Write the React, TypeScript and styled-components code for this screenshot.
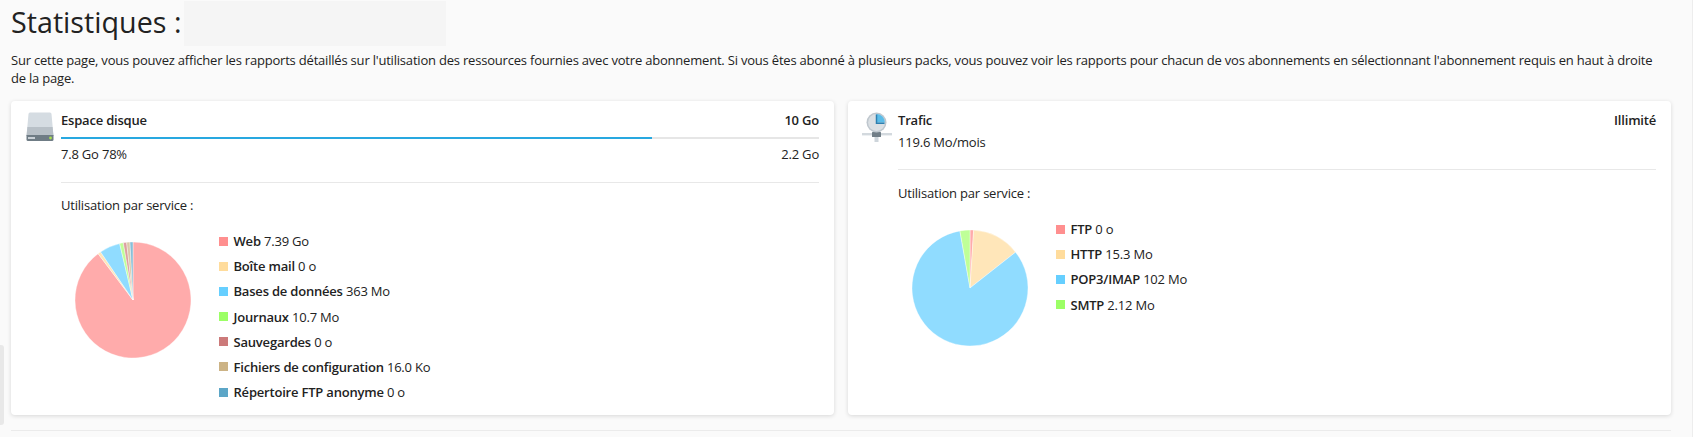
import styled, { createGlobalStyle } from "styled-components";

type Item = { label: string; value: string; color: string; pie: string; end: number };

const diskItems: Item[] = [
  { label: "Web", value: "7.39 Go", color: "#ff8f8f", pie: "#ffabab", end: 323 },
  { label: "Boîte mail", value: "0 o", color: "#ffdc9c", pie: "#ffe6b9", end: 326 },
  { label: "Bases de données", value: "363 Mo", color: "#66cfff", pie: "#90dcff", end: 346.7 },
  { label: "Journaux", value: "10.7 Mo", color: "#9cff66", pie: "#bfff98", end: 350.4 },
  { label: "Sauvegardes", value: "0 o", color: "#cc7a7a", pie: "#dca0a0", end: 353.7 },
  { label: "Fichiers de configuration", value: "16.0 Ko", color: "#ccb385", pie: "#dbc9a8", end: 357 },
  { label: "Répertoire FTP anonyme", value: "0 o", color: "#5ca6c7", pie: "#88bfd8", end: 360 },
];

const trafficItems: Item[] = [
  { label: "FTP", value: "0 o", color: "#ff8f8f", pie: "#ffabab", end: 3.6 },
  { label: "HTTP", value: "15.3 Mo", color: "#ffdc9c", pie: "#ffe6b9", end: 51.8 },
  { label: "POP3/IMAP", value: "102 Mo", color: "#66cfff", pie: "#90dcff", end: 350 },
  { label: "SMTP", value: "2.12 Mo", color: "#9cff66", pie: "#bfff98", end: 360 },
];

const point = (deg: number) => {
  const rad = (deg * Math.PI) / 180;
  return `${(59 + 58 * Math.sin(rad)).toFixed(2)} ${(59 - 58 * Math.cos(rad)).toFixed(2)}`;
};

const Pie = ({ items }: { items: Item[] }) => (
  <PieSvg viewBox="0 0 118 118">
    {items.map((item, i) => {
      const start = i === 0 ? 0 : items[i - 1].end;
      const large = item.end - start > 180 ? 1 : 0;
      return (
        <path
          key={item.label}
          d={`M59 59L${point(start)}A58 58 0 ${large} 1 ${point(item.end)}Z`}
          fill={item.pie}
          stroke="#fff"
          strokeOpacity="0.55"
          strokeWidth="0.7"
        />
      );
    })}
  </PieSvg>
);

const Legend = ({ items }: { items: Item[] }) => (
  <LegendList>
    {items.map((item) => (
      <LegendRow key={item.label}>
        <Swatch $color={item.color} />
        <span>
          <b>{item.label}</b> {item.value}
        </span>
      </LegendRow>
    ))}
  </LegendList>
);

const DiskIcon = () => (
  <svg width="28" height="30" viewBox="0 0 28 30">
    <path d="M2.5 2Q2.6 0.5 4 0.5H24Q25.4 0.5 25.5 2L27.5 24H0.5Z" fill="#d5dce2" />
    <path d="M1.4 15H26.6L27.5 24H0.5Z" fill="#b8c0c7" />
    <path d="M0.5 23H27.5V27.5Q27.5 29 26 29H2Q0.5 29 0.5 27.5Z" fill="#6f7c85" />
    <rect x="2" y="25" width="7" height="2" fill="#c9d0d6" />
    <circle cx="24.5" cy="26" r="1.4" fill="#a8e04e" />
  </svg>
);

const ClockIcon = () => (
  <svg width="30" height="32" viewBox="0 0 30 32">
    <rect x="0" y="21" width="30" height="2.4" fill="#d3d9de" />
    <rect x="12.5" y="23" width="4" height="7" fill="#ced5db" />
    <rect x="10" y="20" width="9" height="5" rx="0.5" fill="#717e87" />
    <circle cx="14.5" cy="10.5" r="10" fill="#bfc7ce" />
    <circle cx="14.5" cy="10.5" r="8.4" fill="#dbe0e4" />
    <path d="M14.5 2.1A8.4 8.4 0 0 1 22.9 10.5H14.5Z" fill="#5bbce8" />
    <path d="M14.5 2.5V11.3H22.5" fill="none" stroke="#2c7fb0" strokeWidth="1.5" />
  </svg>
);

const App = () => (
  <>
    <GlobalStyle />
    <Page>
      <TitleRow>
        <Title>Statistiques :</Title>
        <Masked />
      </TitleRow>
      <Intro>
        Sur cette page, vous pouvez afficher les rapports détaillés sur l'utilisation des ressources fournies avec
        votre abonnement. Si vous êtes abonné à plusieurs packs, vous pouvez voir les rapports pour chacun de vos
        abonnements en sélectionnant l'abonnement requis en haut à droite de la page.
      </Intro>
      <Cards>
        <Card>
          <IconCell>
            <DiskIcon />
          </IconCell>
          <Body>
            <SpaceRow>
              <strong>Espace disque</strong>
              <strong>10 Go</strong>
            </SpaceRow>
            <Track>
              <TrackFill style={{ width: "78%" }} />
            </Track>
            <SpaceRow>
              <span>7.8 Go 78%</span>
              <span>2.2 Go</span>
            </SpaceRow>
            <Divider />
            <Usage>Utilisation par service :</Usage>
            <ChartRow>
              <Pie items={diskItems} />
              <Legend items={diskItems} />
            </ChartRow>
          </Body>
        </Card>
        <Card>
          <ClockCell>
            <ClockIcon />
          </ClockCell>
          <Body>
            <SpaceRow>
              <strong>Trafic</strong>
              <strong>Illimité</strong>
            </SpaceRow>
            <PlainStat>119.6 Mo/mois</PlainStat>
            <Divider $tight />
            <Usage>Utilisation par service :</Usage>
            <ChartRow>
              <Pie items={trafficItems} />
              <Legend items={trafficItems} />
            </ChartRow>
          </Body>
        </Card>
      </Cards>
      <FootLine />
      <SideHandle />
    </Page>
  </>
);

export default App;

const GlobalStyle = createGlobalStyle`
  html, body {
    margin: 0;
    padding: 0;
    background: #fafafa;
  }
  body {
    font-family: "Open Sans", "Liberation Sans", sans-serif;
    font-size: 13px;
    line-height: 18px;
    letter-spacing: -0.2px;
    color: #222;
  }
`;

const Page = styled.div`
  position: relative;
  box-sizing: border-box;
  width: 1693px;
  height: 437px;
  padding: 0 21px 0 11px;
  border-right: 1px solid #ededed;
  overflow: hidden;
`;

const TitleRow = styled.div`
  display: flex;
  align-items: flex-start;
  gap: 3px;
  padding-top: 1px;
`;

const Title = styled.h1`
  margin: 0;
  padding-top: 3px;
  font-size: 28.7px;
  font-weight: 400;
  line-height: 36px;
  letter-spacing: 0;
  color: #222;
`;

const Masked = styled.div`
  width: 262px;
  height: 45px;
  background: #f5f5f5;
`;

const Intro = styled.p`
  margin: 5px 0 14px;
  padding-right: 4px;
  line-height: 18px;
  letter-spacing: -0.2px;
`;

const Cards = styled.div`
  display: grid;
  grid-template-columns: 823px 823px;
  gap: 14px;
`;

const Card = styled.section`
  display: flex;
  box-sizing: border-box;
  height: 314px;
  padding: 10px 15px;
  background: #fff;
  border-radius: 4px;
  box-shadow: 0 1px 4px rgba(0, 0, 0, 0.14);
`;

const IconCell = styled.div`
  flex: none;
  width: 35px;
  margin: 1px 0 0;
`;

const ClockCell = styled(IconCell)`
  margin-left: -1px;
  width: 36px;
`;

const Body = styled.div`
  flex: 1;
  min-width: 0;
  strong {
    font-weight: 600;
  }
`;

const SpaceRow = styled.div`
  display: flex;
  justify-content: space-between;
`;

const Track = styled.div`
  height: 2px;
  margin: 8px 0 6px;
  background: #e6e6e6;
`;

const TrackFill = styled.div`
  height: 100%;
  background: #28a8e0;
`;

const PlainStat = styled.div`
  margin-top: 4px;
`;

const Divider = styled.hr<{ $tight?: boolean }>`
  height: 1px;
  margin: ${(p) => (p.$tight ? "18px 0 14px" : "19px 0 13px")};
  border: 0;
  background: #e8e8e8;
`;

const Usage = styled.div`
  line-height: 18px;
`;

const ChartRow = styled.div`
  display: flex;
  align-items: flex-start;
  gap: 27.5px;
  margin-top: 10px;
  padding-left: 12.5px;
`;

const PieSvg = styled.svg`
  flex: none;
  width: 118px;
  height: 118px;
  margin-top: 17px;
`;

const LegendList = styled.ul`
  display: flex;
  flex-direction: column;
  gap: 7.2px;
  margin: 8px 0 0;
  padding: 0;
  list-style: none;
  b {
    font-weight: 600;
  }
`;

const LegendRow = styled.li`
  display: flex;
  align-items: center;
  gap: 5.5px;
`;

const Swatch = styled.i<{ $color: string }>`
  flex: none;
  width: 9px;
  height: 9px;
  background: ${(p) => p.$color};
`;

const FootLine = styled.div`
  height: 1px;
  margin-top: 15px;
  background: #ebebeb;
`;

const SideHandle = styled.div`
  position: absolute;
  left: 0;
  top: 345px;
  width: 4px;
  height: 80px;
  background: #e8e8e8;
  border-radius: 0 3px 3px 0;
`;
